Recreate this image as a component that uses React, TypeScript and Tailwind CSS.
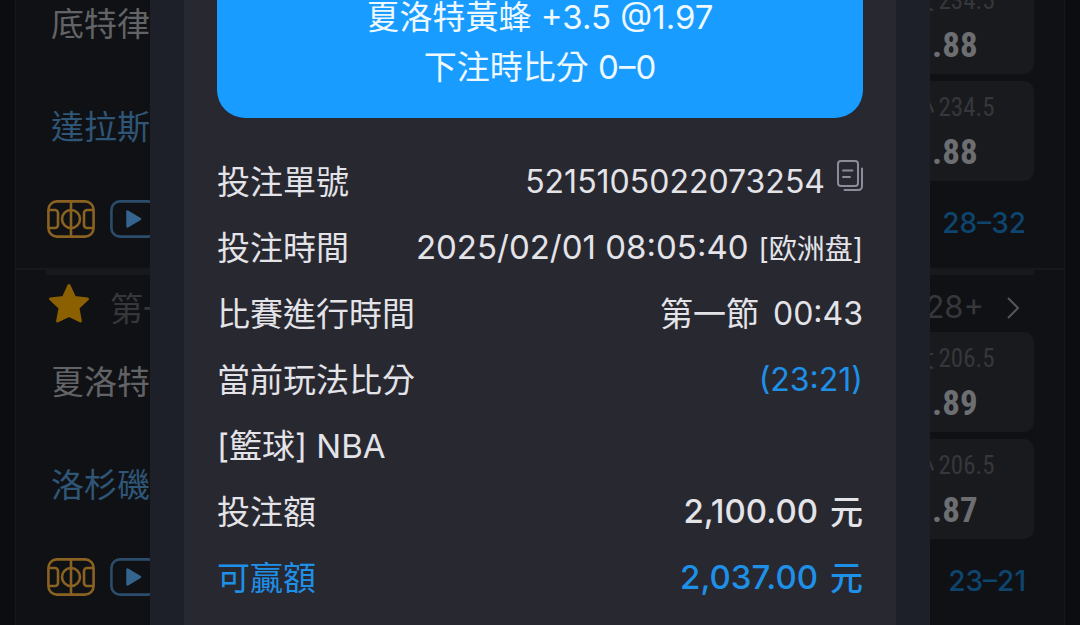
import { ReactNode } from "react";

type Odds = { side: string; line: string; price: string };

type Match = {
    home: string;
    away: string;
    clock: string;
    markets: string;
    score: string;
    odds: Odds[];
};

const matches: Match[] = [
    {
        home: "底特律",
        away: "達拉斯",
        clock: "第一節",
        markets: "128+",
        score: "28–32",
        odds: [
            { side: "大", line: "234.5", price: "1.88" },
            { side: "小", line: "234.5", price: "1.88" },
        ],
    },
    {
        home: "夏洛特",
        away: "洛杉磯",
        clock: "第一節",
        markets: "128+",
        score: "23–21",
        odds: [
            { side: "大", line: "206.5", price: "1.89" },
            { side: "小", line: "206.5", price: "1.87" },
        ],
    },
];

function CourtIcon() {
    return (
        <svg width="48" height="38" viewBox="0 0 48 38" fill="none" stroke="#8a6222" strokeWidth="2.6">
            <rect x="1.4" y="1.4" width="45.2" height="35.2" rx="8.5" />
            <path d="M24 1.4v35.2" />
            <circle cx="24" cy="19" r="9" />
            <path d="M1.4 10H8a3 3 0 0 1 3 3v12a3 3 0 0 1-3 3H1.4M46.6 10H40a3 3 0 0 0-3 3v12a3 3 0 0 0 3 3h6.6" />
        </svg>
    );
}

function PlayIcon() {
    return (
        <svg width="48" height="38" viewBox="0 0 48 38" fill="none">
            <rect x="1.4" y="1.4" width="45.2" height="35.2" rx="8.5" stroke="#2b4d6b" strokeWidth="2.6" />
            <path d="M17.5 11.5v15L30 19z" fill="#35648f" stroke="#35648f" strokeWidth="2.5" strokeLinejoin="round" />
        </svg>
    );
}

function StarIcon() {
    return (
        <svg width="42" height="42" viewBox="0 0 42 42">
            <path
                d="M21 2.5l5.5 11.9 13 1.5-9.6 9 2.5 13.1L21 32.5 9.6 38l2.5-13.1-9.6-9 13-1.5z"
                fill="#8a6000"
                stroke="#8a6000"
                strokeWidth="3"
                strokeLinejoin="round"
            />
        </svg>
    );
}

function CopyIcon() {
    return (
        <svg width="26" height="31" viewBox="0 0 26 31" fill="none" stroke="#8b8b99" strokeWidth="2" strokeLinecap="round">
            <rect x="1" y="1" width="20" height="25" rx="3" />
            <path d="M25 8.5v18a3.5 3.5 0 0 1-3.5 3.5H7.5M6 10.5h9.5M6 17h7" />
        </svg>
    );
}

function OddsButton({ side, line, price }: Odds) {
    return (
        <button
            type="button"
            className="flex h-[100px] w-[168px] flex-col items-center rounded-[10px] bg-[#191a1d] pt-[9px] font-['Roboto_Condensed','Noto_Sans_CJK_TC',sans-serif]"
        >
            <span className="flex items-center gap-1 pl-1 text-[25px] leading-9 text-[#36373b]">
                <span>{side}</span>
                <span>{line}</span>
            </span>
            <span className="pr-2 text-[35px] leading-[54px] font-bold text-[#6d6e71]">{price}</span>
        </button>
    );
}

function MatchCard({ match }: { match: Match }) {
    return (
        <section className="h-[358px] border-t-2 border-[#17181c] px-[30px]">
            <div className="h-[5px] bg-[#18191c]" />
            <header className="flex h-[57px] items-center justify-between text-[33px] text-[#36373b]">
                <div className="flex items-center gap-5 pl-[2px]">
                    <button type="button" aria-label="收藏">
                        <StarIcon />
                    </button>
                    <span className="pt-3">{match.clock}</span>
                </div>
                <a href="#markets" className="flex items-center gap-[22px] pt-2 pr-[14px]">
                    <span className="text-[31px]">{match.markets}</span>
                    <svg width="14" height="24" viewBox="0 0 14 24" fill="none" stroke="#55565b" strokeWidth="2">
                        <path d="M2 2l10 10L2 22" />
                    </svg>
                </a>
            </header>
            <div className="flex justify-between">
                <div className="flex flex-col gap-[3px] pl-[5px] text-[33px] leading-[100px]">
                    <span className="text-[#626366]">{match.home}</span>
                    <span className="text-[#2f5577]">{match.away}</span>
                </div>
                <div className="flex flex-col gap-[7px]">
                    {match.odds.map((item) => (
                        <OddsButton key={item.side} {...item} />
                    ))}
                </div>
            </div>
            <footer className="flex h-[76px] items-center justify-between pr-2">
                <div className="flex gap-[15px] pl-px">
                    <CourtIcon />
                    <PlayIcon />
                </div>
                <span className="pt-2 text-[28px] font-medium text-[#0d456f]">{match.score}</span>
            </footer>
        </section>
    );
}

function Row({ label, children, accent = false }: { label: string; children?: ReactNode; accent?: boolean }) {
    return (
        <div className={accent ? "flex h-[66px] items-center justify-between text-[#1e90e8]" : "flex h-[66px] items-center justify-between"}>
            <dt>{label}</dt>
            <dd className="flex items-center">{children}</dd>
        </div>
    );
}

function BetDialog() {
    return (
        <div role="dialog" aria-label="注單詳情" className="absolute inset-x-[150px] inset-y-0 overflow-hidden bg-[#1d2029] px-[34px]">
            <div className="flow-root h-full bg-[#282831] px-[33px] text-[33px] text-[#e3e3e8]">
                <div className="-mt-2 rounded-b-[28px] bg-[#189cff] pb-[26px] text-center leading-[50px] text-[#eef8ff]">
                    <p className="h-[50px]">夏洛特黃蜂 +3.5 @1.97</p>
                    <p className="h-[50px]">下注時比分 0–0</p>
                </div>
                <dl className="pt-8">
                    <Row label="投注單號">
                        <span className="pb-0.5 text-[32px]">5215105022073254</span>
                        <button type="button" aria-label="複製" className="pb-4 pl-3">
                            <CopyIcon />
                        </button>
                    </Row>
                    <Row label="投注時間">
                        <span className="pb-0.5">2025/02/01 08:05:40</span>
                        <span className="pl-2.5 text-[28px]">[欧洲盘]</span>
                    </Row>
                    <Row label="比賽進行時間">
                        <span>第一節</span>
                        <span className="pb-0.5 pl-3.5 text-[32px]">00:43</span>
                    </Row>
                    <Row label="當前玩法比分">
                        <span className="pb-0.5 text-[32px] text-[#1e90e8]">(23:21)</span>
                    </Row>
                    <Row label="[籃球] NBA" />
                    <Row label="投注額">
                        <span className="pb-0.5 font-medium">2,100.00</span>
                        <span className="pl-3 font-medium">元</span>
                    </Row>
                    <Row label="可贏額" accent>
                        <span className="pb-0.5 font-medium">2,037.00</span>
                        <span className="pl-3 font-medium">元</span>
                    </Row>
                </dl>
            </div>
        </div>
    );
}

export default function App() {
    return (
        <div className="relative h-screen overflow-hidden bg-[#0c0d10] font-['Inter','Noto_Sans_CJK_TC',sans-serif]">
            <main className="mx-[15px] -mt-[90px] border-x border-[#17181c] bg-[#101114]">
                {matches.map((match) => (
                    <MatchCard key={match.home} match={match} />
                ))}
            </main>
            <BetDialog />
        </div>
    );
}
